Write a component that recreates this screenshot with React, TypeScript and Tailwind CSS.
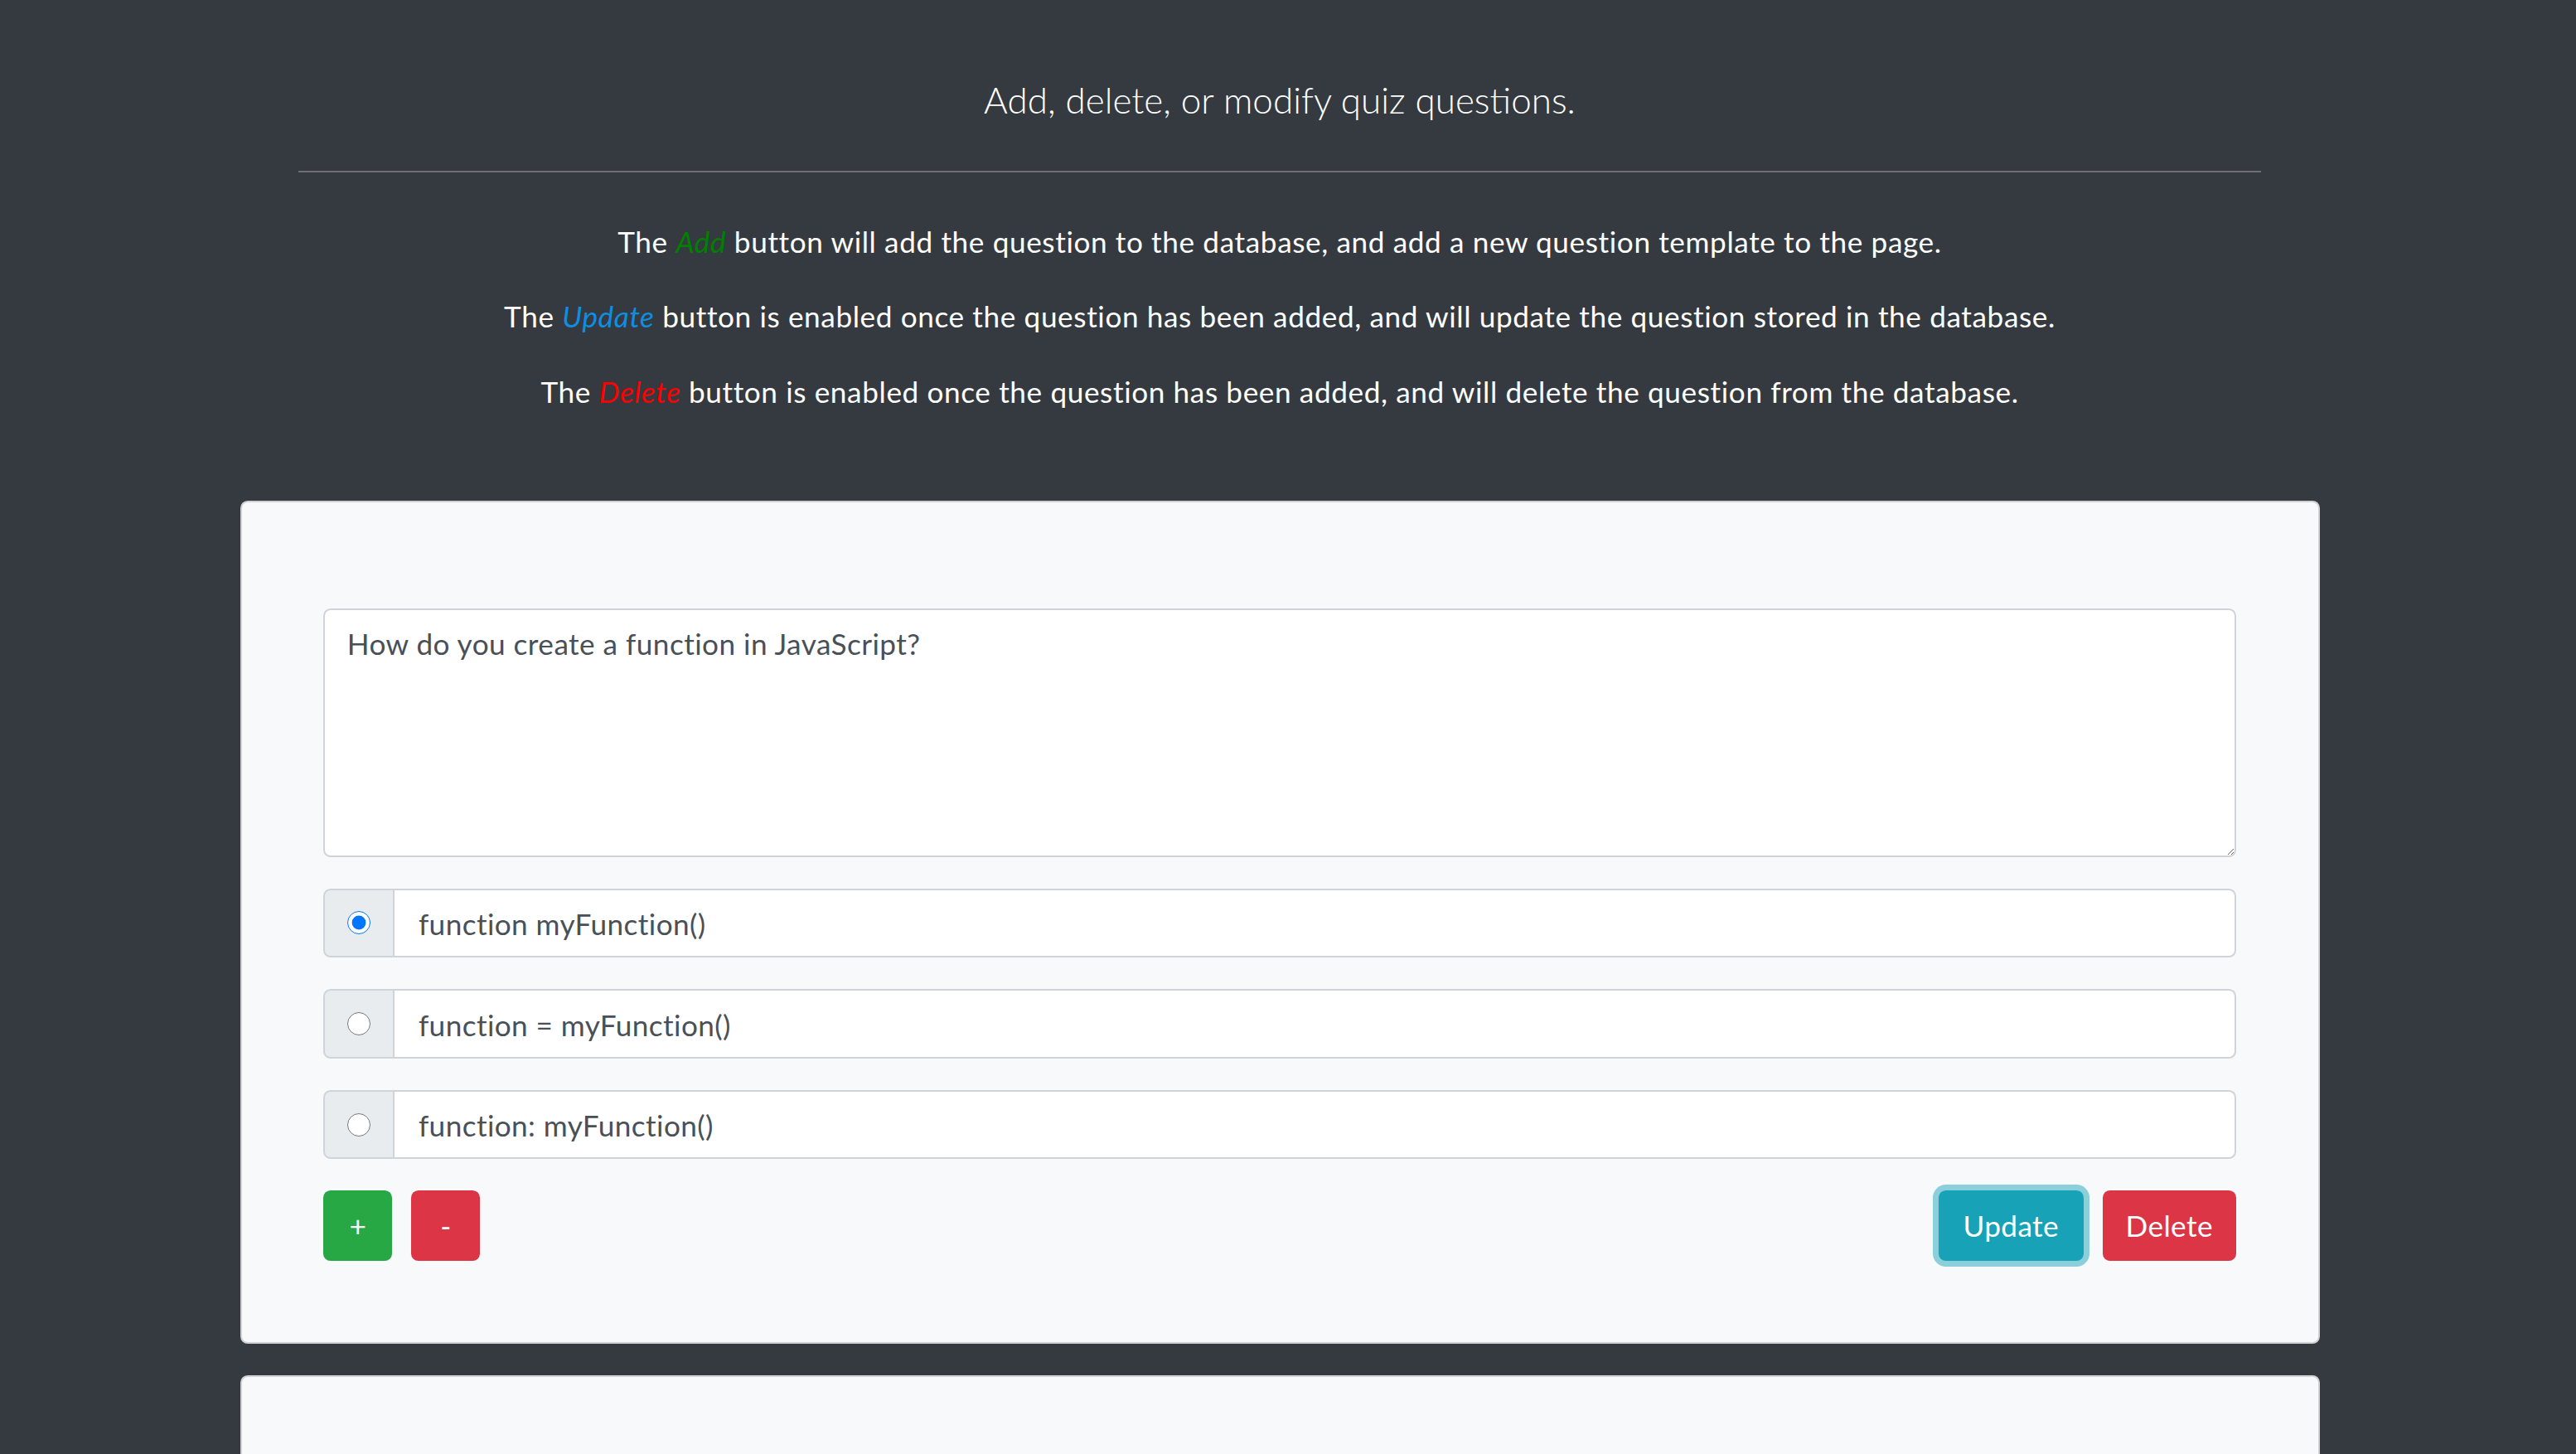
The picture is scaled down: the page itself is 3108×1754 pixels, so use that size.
import React from 'react';

const options = [
  { text: 'function myFunction()', checked: true },
  { text: 'function = myFunction()', checked: false },
  { text: 'function: myFunction()', checked: false },
];

const QuestionCard: React.FC = () => {
  return (
    <div className="mx-auto mt-[105px] w-[2509px] rounded-[8.8px] border-[2.2px] border-[#cfd1d4] bg-[#f8f9fa] px-[98.8px] pt-[127.8px] pb-[97.8px]">
      <textarea
        defaultValue="How do you create a function in JavaScript?"
        className="block h-[300px] w-full resize-y rounded-[8.8px] border-[2.2px] border-[#ced4da] bg-white px-[26.4px] pt-[14px] pb-[13.2px] text-[35.2px] leading-[52.8px] tracking-[0.45px] text-[#495057] outline-none"
      />
      {options.map((opt, i) => (
        <div key={i} className="mt-[38px] flex h-[83.6px]">
          <div className="flex w-[86px] items-center justify-center rounded-l-[8.8px] border-[2.2px] border-[#ced4da] bg-[#e9ecef]">
            <input type="radio" name="answer" defaultChecked={opt.checked} className="m-0 h-[28px] w-[28px]" />
          </div>
          <input
            type="text"
            defaultValue={opt.text}
            className="flex-1 rounded-r-[8.8px] border-[2.2px] border-l-0 border-[#ced4da] bg-white pt-[2px] pl-[28.6px] pr-[26.4px] text-[35.2px] tracking-[0.4px] text-[#495057] outline-none"
          />
        </div>
      ))}
      <div className="mt-[38px] flex items-center justify-between">
        <div className="flex gap-[23px]">
          <button className="h-[85px] w-[83px] rounded-[8.8px] bg-[#28a745] text-[35.2px] text-white">+</button>
          <button className="h-[85px] w-[83px] rounded-[8.8px] bg-[#dc3545] text-[35.2px] text-white">-</button>
        </div>
        <div className="flex gap-[23px]">
          <button className="h-[85px] w-[175px] rounded-[8.8px] bg-[#17a2b8] text-[35.2px] tracking-[0.4px] text-white ring-[7px] ring-[#8bcfdb]">
            Update
          </button>
          <button className="h-[85px] w-[161px] rounded-[8.8px] bg-[#dc3545] text-[35.2px] tracking-[0.4px] text-white">
            Delete
          </button>
        </div>
      </div>
    </div>
  );
};

const App: React.FC = () => {
  return (
    <div className="h-screen w-full overflow-hidden bg-[#343a40] pr-[20px] font-[Lato,sans-serif]">
      <div className="mx-auto w-[2368px] pt-[87px]">
        <h1 className="text-center text-[44px] font-light leading-[66px] text-white">
          Add, delete, or modify quiz questions.
        </h1>
        <hr className="mt-[53px] h-[2px] border-0 bg-[#6c6e78]" />
        <div className="mt-[57px] flex flex-col gap-[37.7px] text-center text-[35.2px] leading-[52.8px] tracking-[0.6px] text-white">
          <p>
            The <i className="text-[#008000]">Add</i> button will add the question to the database, and add a new
            question template to the page.
          </p>
          <p>
            The <i className="text-[#0f8ee0]">Update</i> button is enabled once the question has been added, and will
            update the question stored in the database.
          </p>
          <p>
            The <i className="text-[#ff0000]">Delete</i> button is enabled once the question has been added, and will
            delete the question from the database.
          </p>
        </div>
      </div>

      <QuestionCard />

      <div className="mx-auto mt-[38px] h-[400px] w-[2509px] rounded-[8.8px] border-[2.2px] border-[#cfd1d4] bg-[#f8f9fa]" />
    </div>
  );
};

export default App;
